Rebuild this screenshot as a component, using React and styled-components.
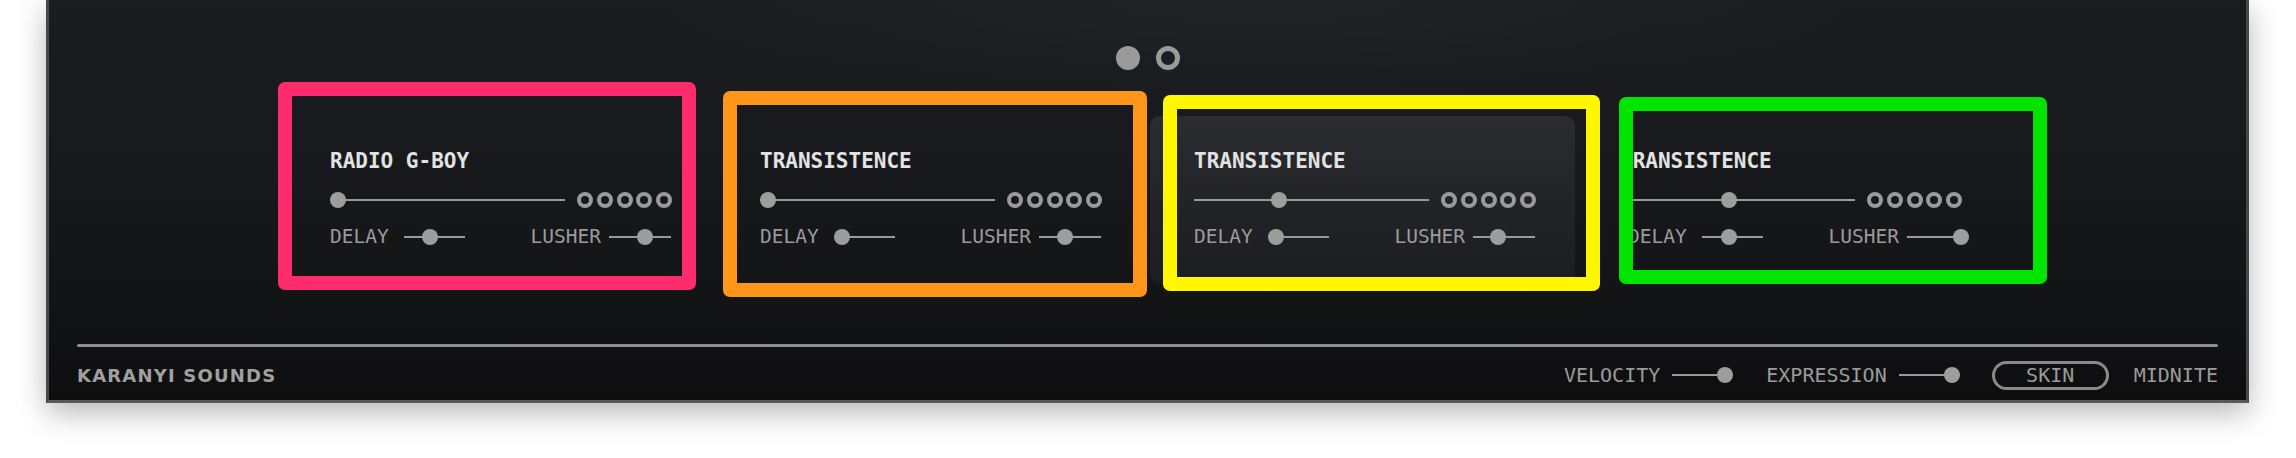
import React from "react";
import styled, { createGlobalStyle } from "styled-components";

const Global = createGlobalStyle`
  html, body { margin: 0; padding: 0; background: #ffffff; }
  body { width: 2296px; height: 458px; overflow: hidden; font-family: "DejaVu Sans Mono", "Liberation Mono", monospace; }
`;

const Stage = styled.div`
  position: relative;
  width: 2296px;
  height: 458px;
`;

const Window = styled.div`
  margin-left: 46px;
  width: 2203px;
  height: 403px;
  box-sizing: border-box;
  border: 3px solid #47484a;
  border-top: none;
  border-bottom-color: #58595a;
  background:
    radial-gradient(ellipse 900px 160px at 55% 0%, rgba(255,255,255,0.03), rgba(255,255,255,0) 70%),
    linear-gradient(180deg, #1b1c1f 0%, #18191c 40%, #131416 75%, #0e0e0f 100%);
  box-shadow: 0 10px 28px rgba(0, 0, 0, 0.28);
  padding: 46px 28px 0;
  display: flex;
  flex-direction: column;
`;

const Dots = styled.div`
  display: flex;
  justify-content: center;
  gap: 16px;
  height: 24px;
`;

const Dot = styled.div`
  width: 24px;
  height: 24px;
  box-sizing: border-box;
  border-radius: 50%;
  background: ${(p) => (p.$filled ? "#9a9a9a" : "transparent")};
  border: ${(p) => (p.$filled ? "none" : "5px solid #9a9a9a")};
`;

const CardsRow = styled.div`
  margin-top: 46px;
  display: flex;
  justify-content: center;
  gap: 5px;
  padding-right: 8px;
`;

const Card = styled.div`
  width: 425px;
  height: 168px;
  margin-left: ${(p) => p.$ml || 0}px;
  box-sizing: border-box;
  padding: 33px 37px 0 44px;
  border-radius: 10px;
  display: flex;
  flex-direction: column;
  background: ${(p) =>
    p.$hover ? "linear-gradient(180deg, #2b2c2f 0%, #222326 55%, #1c1d20 100%)" : "transparent"};
`;

const Title = styled.div`
  font-family: "DejaVu Sans Mono", monospace;
  font-weight: 700;
  font-size: 21px;
  line-height: 24px;
  height: 24px;
  color: #e2e2e2;
  white-space: nowrap;
`;

const MainRow = styled.div`
  margin-top: 19px;
  display: flex;
  align-items: center;
  gap: 12px;
  height: 16px;
`;

const Rings = styled.div`
  display: flex;
  gap: 3.75px;
`;

const Ring = styled.div`
  width: 16px;
  height: 16px;
  box-sizing: border-box;
  border-radius: 50%;
  border: 4px solid #9a9a9a;
`;

const BottomRow = styled.div`
  margin-top: 19px;
  margin-left: ${(p) => p.$shift || 0}px;
  margin-right: ${(p) => -(p.$shift || 0)}px;
  height: 20px;
  display: flex;
  align-items: center;
  justify-content: space-between;
  padding-right: 3px;
`;

const Control = styled.div`
  display: flex;
  align-items: center;
  gap: ${(p) => p.$gap}px;
`;

const Label = styled.span`
  font-family: "DejaVu Sans Mono", monospace;
  font-size: ${(p) => p.$size || 19.5}px;
  line-height: 20px;
  color: #9b9b9b;
  white-space: nowrap;
`;

const Track = styled.div`
  position: relative;
  width: ${(p) => p.$w}px;
  height: 16px;
  flex: none;
  &::before {
    content: "";
    position: absolute;
    left: 0;
    right: 0;
    top: 7px;
    height: 2px;
    background: #9a9a9a;
  }
`;

const Knob = styled.div`
  position: absolute;
  top: 0;
  width: 16px;
  height: 16px;
  border-radius: 50%;
  background: #9d9d9d;
`;

const Slider = ({ w, v }) => (
  <Track $w={w}>
    <Knob style={{ left: `${v * (w - 16)}px` }} />
  </Track>
);

const Divider = styled.div`
  margin-top: 60px;
  height: 3px;
  border-radius: 2px;
  background: #8f8f8f;
`;

const Footer = styled.div`
  height: 53px;
  box-sizing: border-box;
  padding-top: 3px;
  display: flex;
  align-items: center;
  justify-content: space-between;
`;

const Brand = styled.div`
  font-family: "DejaVu Sans", "Liberation Sans", sans-serif;
  font-weight: 700;
  font-size: 18px;
  letter-spacing: 1.2px;
  color: #a0a0a0;
  white-space: nowrap;
`;

const FooterRight = styled.div`
  display: flex;
  align-items: center;
`;

const FootItem = styled.div`
  display: flex;
  align-items: center;
  gap: 12px;
  margin-left: ${(p) => p.$ml || 0}px;
`;

const Pill = styled.div`
  margin-left: 32px;
  width: 117px;
  height: 29px;
  box-sizing: border-box;
  border: 3px solid #8a8a8a;
  border-radius: 15px;
  display: flex;
  align-items: center;
  justify-content: center;
  font-family: "DejaVu Sans Mono", monospace;
  font-size: 20px;
  color: #9b9b9b;
`;

const Frame = styled.div`
  position: absolute;
  left: ${(p) => p.$x}px;
  top: ${(p) => p.$y}px;
  width: ${(p) => p.$w}px;
  height: ${(p) => p.$h}px;
  box-sizing: border-box;
  border: 14px solid ${(p) => p.$c};
  border-radius: 7px;
  pointer-events: none;
`;

const cards = [
  { title: "RADIO G-BOY", main: 0, delay: 0.4, lusher: 0.6 },
  { title: "TRANSISTENCE", main: 0, delay: 0, lusher: 0.4 },
  { title: "TRANSISTENCE", main: 0.35, delay: 0, lusher: 0.37, hover: true, ml: 4 },
  { title: "TRANSISTENCE", main: 0.46, delay: 0.42, lusher: 1, ml: -4, shift: 8 },
];

const frames = [
  { x: 278, y: 82, w: 418, h: 208, c: "#ff2c6d" },
  { x: 723, y: 91, w: 424, h: 206, c: "#ff9519" },
  { x: 1163, y: 95, w: 437, h: 196, c: "#fff700" },
  { x: 1619, y: 97, w: 428, h: 187, c: "#00e500" },
];

export default function App() {
  return (
    <Stage>
      <Global />
      <Window>
        <Dots>
          <Dot $filled />
          <Dot />
        </Dots>
        <CardsRow>
          {cards.map((c, i) => (
            <Card key={i} $hover={c.hover} $ml={c.ml}>
              <Title>{c.title}</Title>
              <MainRow>
                <Slider w={235} v={c.main} />
                <Rings>
                  {[0, 1, 2, 3, 4].map((k) => (
                    <Ring key={k} />
                  ))}
                </Rings>
              </MainRow>
              <BottomRow $shift={c.shift}>
                <Control $gap={15}>
                  <Label>DELAY</Label>
                  <Slider w={61} v={c.delay} />
                </Control>
                <Control $gap={8}>
                  <Label>LUSHER</Label>
                  <Slider w={62} v={c.lusher} />
                </Control>
              </BottomRow>
            </Card>
          ))}
        </CardsRow>
        <Divider />
        <Footer>
          <Brand>KARANYI SOUNDS</Brand>
          <FooterRight>
            <FootItem>
              <Label $size={20}>VELOCITY</Label>
              <Slider w={61} v={1} />
            </FootItem>
            <FootItem $ml={33}>
              <Label $size={20}>EXPRESSION</Label>
              <Slider w={61} v={1} />
            </FootItem>
            <Pill>SKIN</Pill>
            <FootItem $ml={25}>
              <Label $size={20}>MIDNITE</Label>
            </FootItem>
          </FooterRight>
        </Footer>
      </Window>
      {frames.map((f, i) => (
        <Frame key={i} $x={f.x} $y={f.y} $w={f.w} $h={f.h} $c={f.c} />
      ))}
    </Stage>
  );
}
